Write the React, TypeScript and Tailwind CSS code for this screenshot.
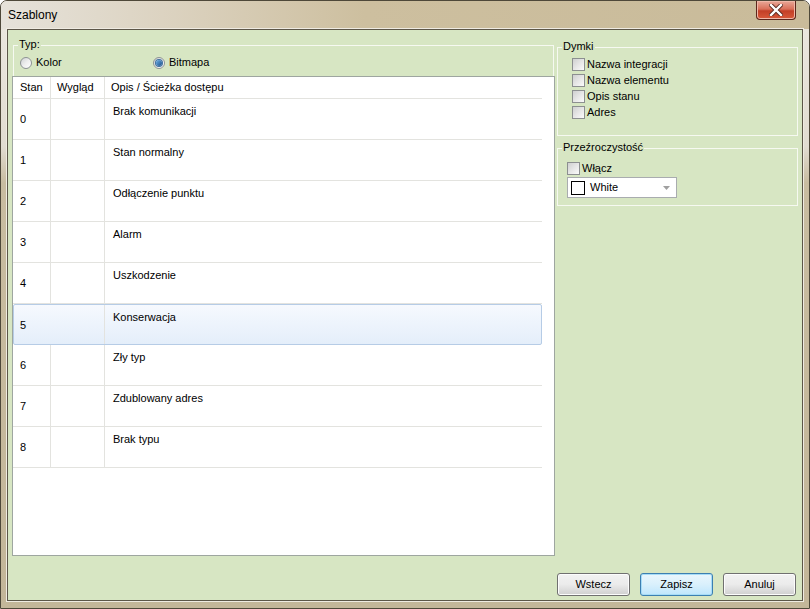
import React from "react";

function Checkbox({ label }: { label: string }) {
  return (
    <div className="flex items-center h-[16px]">
      <div className="w-[13px] h-[13px] border border-[#8c8f90] bg-gradient-to-br from-[#cfd0d0] via-[#e6e6e6] to-[#fbfbfb]" />
      <span className="ml-[2px] text-[11px] leading-[13px] text-black">{label}</span>
    </div>
  );
}

function Radio({ label, checked }: { label: string; checked?: boolean }) {
  return (
    <div className="flex items-center">
      <div className="w-[12px] h-[12px] rounded-full border border-[#8d9294] bg-gradient-to-br from-[#cfd2d4] via-[#eeeeee] to-[#ffffff] flex items-center justify-center">
        {checked && (
          <div className="w-[6px] h-[6px] rounded-full bg-gradient-to-br from-[#6fb2e8] to-[#1a4f8a] ring-1 ring-[#3d6f9e]" />
        )}
      </div>
      <span className="ml-[4px] text-[11px] leading-[13px] text-black">{label}</span>
    </div>
  );
}

function Button({ label, focused }: { label: string; focused?: boolean }) {
  return (
    <div
      className={
        focused
          ? "w-[73px] h-[23px] rounded-[3px] border border-[#3c7fb1] bg-gradient-to-b from-[#eaf6fd] via-[#d9f0fc] to-[#bee6fd] shadow-[inset_0_0_0_1px_#a6dcf7] flex items-center justify-center text-[11px] text-black"
          : "w-[73px] h-[23px] rounded-[3px] border border-[#707070] bg-gradient-to-b from-[#f2f2f2] via-[#ebebeb] to-[#cfcfcf] shadow-[inset_0_0_0_1px_#fcfcfc] flex items-center justify-center text-[11px] text-black"
      }
    >
      {label}
    </div>
  );
}

export default function App() {
  const rows = [
    "Brak komunikacji",
    "Stan normalny",
    "Odłączenie punktu",
    "Alarm",
    "Uszkodzenie",
    "Konserwacja",
    "Zły typ",
    "Zdublowany adres",
    "Brak typu",
  ];
  return (
    <div className="w-[810px] h-[609px] relative overflow-hidden rounded-t-[7px] border border-[#4e4839] bg-[linear-gradient(180deg,#ece8e0_0%,#e1dcd1_24%,#c8bca0_30%,#c3b699_100%)] flex flex-col font-['Liberation_Sans',Arial,sans-serif]">
      {/* Title bar */}
      <div className="h-[28px] flex items-center pl-[7px] bg-[linear-gradient(90deg,#e6e2da_0%,#dcd3c1_20%,#cdbf9f_45%,#c9bb9a_100%)] shrink-0">
        <span className="text-[12px] text-black leading-none">Szablony</span>
      </div>
      <div className="absolute top-0 right-[13px] w-[40px] h-[19px] rounded-b-[4px] border border-[#5c261c] border-t-0 bg-[linear-gradient(180deg,#e9a898_0%,#d9705a_45%,#c33f27_55%,#d8593a_100%)] shadow-[inset_0_0_0_1px_#f0b8a8] flex items-center justify-center">
        <svg width="14" height="12" viewBox="0 0 14 12">
          <path d="M2 1 L12 11 M12 1 L2 11" stroke="#5a2a20" strokeWidth="4.2" strokeLinecap="square" />
          <path d="M2 1 L12 11 M12 1 L2 11" stroke="#ffffff" strokeWidth="2.4" strokeLinecap="square" />
        </svg>
      </div>

      {/* Client */}
      <div className="mx-[6px] mb-[7px] h-[572px] border border-[#5c5648] bg-[#d7e6c3] shadow-[0_0_0_1px_#efebe2] flex flex-col">
        <div className="flex h-[526px]">
          {/* Left column */}
          <div className="ml-[4px] w-[543px] flex flex-col">
            <div className="h-[46px] pt-[15px] pl-[1px] pr-[1px]">
              <div className="relative h-[31px] border border-b-0 border-[#f6f9f1]">
                <span className="absolute -top-[8px] left-[4px] px-[1px] bg-[#d7e6c3] text-[11px] leading-[13px] text-black">Typ:</span>
                <div className="flex items-center pt-[10px] pl-[6px]">
                  <div className="w-[133px]">
                    <Radio label="Kolor" />
                  </div>
                  <Radio label="Bitmapa" checked />
                </div>
              </div>
            </div>
            <div className="h-[480px] border border-[#9ea6a0] bg-white">
              <div className="w-[529px]">
                <div className="flex h-[22px] border-b border-[#e3e3df] text-[11px] text-black">
                  <div className="w-[38px] border-r border-[#e3e3df] pl-[7px] flex items-center">Stan</div>
                  <div className="w-[54px] border-r border-[#e3e3df] pl-[6px] flex items-center">Wygląd</div>
                  <div className="flex-1 pl-[6px] flex items-center">Opis / Ścieżka dostępu</div>
                </div>
                {rows.map((r, i) => {
                  const sel = i === 5;
                  return (
                    <div
                      key={i}
                      className={
                        sel
                          ? "flex h-[41px] rounded-[2px] border border-[#b6cce6] bg-gradient-to-b from-[#f6f9fe] to-[#e4eefa] text-[11px] text-black"
                          : "flex h-[41px] border-b border-[#e3e3df] text-[11px] text-black"
                      }
                    >
                      <div className={sel ? "w-[37px] pl-[6px] flex items-center pt-[1px]" : "w-[38px] border-r border-[#e3e3df] pl-[7px] flex items-center pt-[1px]"}>
                        {i}
                      </div>
                      <div className="w-[54px] border-r border-[#e3e3df]" />
                      <div className="flex-1 pl-[8px] pt-[6px] leading-[13px]">{r}</div>
                    </div>
                  );
                })}
              </div>
            </div>
          </div>

          {/* Right column */}
          <div className="ml-[2px] w-[241px] flex flex-col">
            <div className="mt-[17px] relative h-[89px] border border-[#f6f9f1]">
              <span className="absolute -top-[8px] left-[4px] px-[1px] bg-[#d7e6c3] text-[11px] leading-[13px] text-black">Dymki</span>
              <div className="pl-[14px] pt-[8px] flex flex-col">
                <Checkbox label="Nazwa integracji" />
                <Checkbox label="Nazwa elementu" />
                <Checkbox label="Opis stanu" />
                <Checkbox label="Adres" />
              </div>
            </div>
            <div className="mt-[12px] relative h-[58px] border border-[#f6f9f1]">
              <span className="absolute -top-[8px] left-[4px] px-[1px] bg-[#d7e6c3] text-[11px] leading-[13px] text-black">Przeźroczystość</span>
              <div className="pl-[9px] pt-[11px]">
                <Checkbox label="Włącz" />
                <div className="mt-[1px] w-[110px] h-[21px] border border-[#a9acaf] bg-white flex items-center">
                  <div className="ml-[3px] w-[14px] h-[14px] border border-black bg-white" />
                  <span className="ml-[5px] text-[11px] text-black flex-1">White</span>
                  <svg width="7" height="4" viewBox="0 0 7 4" className="mr-[6px]">
                    <path d="M0 0 L7 0 L3.5 4 Z" fill="#a0a0a0" />
                  </svg>
                </div>
              </div>
            </div>
          </div>
        </div>

        {/* Buttons */}
        <div className="mt-[17px] flex justify-end gap-[10px] pr-[6px]">
          <Button label="Wstecz" />
          <Button label="Zapisz" focused />
          <Button label="Anuluj" />
        </div>
      </div>
    </div>
  );
}
